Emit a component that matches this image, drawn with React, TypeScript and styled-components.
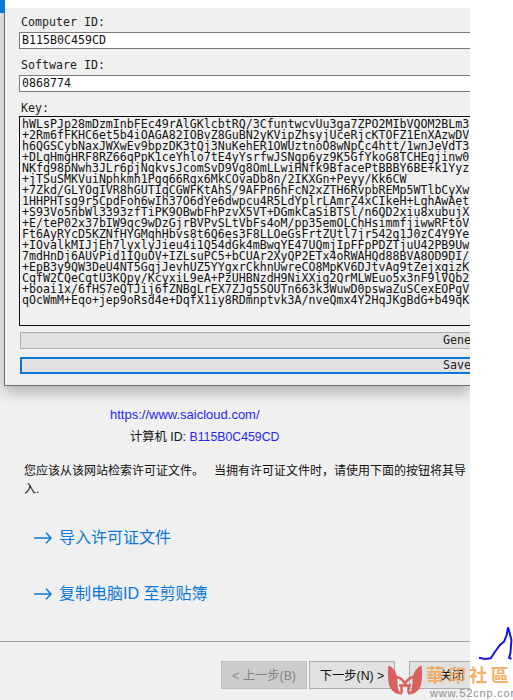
import React from "react";
import styled, { createGlobalStyle } from "styled-components";

const keyLines = [
  "hWLsPJp28mDzmInbFEc49rAlGKlcbtRQ/3CfuntwcvUu3ga7ZPO2MIbVQOM2BLm3",
  "+2Rm6fFKHC6et5b4iOAGA82IOBvZ8GuBN2yKVipZhsyjUceRjcKTOFZ1EnXAzwDV",
  "h6QGSCybNaxJWXwEv9bpzDK3tQj3NuKehER1OWUztnoO8wNpCc4htt/1wnJeVdT3",
  "+DLqHmgHRF8RZ66qPpK1ceYhlo7tE4yYsrfwJSNgp6yz9K5GfYkoG8TCHEgjinw0",
  "NKfq98pNwh3JLr6pjNqkvsJcomSvD9Vg8OmLLwiHNfk9BfacePtBBBY6BE+k1Yyz",
  "+jTSuSMKVuiNphkmh1Pgq66Rgx6MkCOvaDb8n/2IKXGn+Peyy/Kk6CW",
  "+7Zkd/GLYOgIVR8hGUTIqCGWFKtAhS/9AFPn6hFcN2xZTH6RvpbREMp5WTlbCyXw",
  "1HHPHTsg9r5CpdFoh6wIh37O6dYe6dwpcu4R5LdYplrLAmrZ4xCIkeH+LqhAwAet",
  "+S93Vo5nbWl3393zfTiPK9OBwbFhPzvX5VT+DGmkCaSiBTSl/n6QD2xiu8xubujX",
  "+E/teP02x37bIW9qc9wDzGjrBVPvSLtVbFs4oM/pp35emOLChHsimmfjiwwRFtoV",
  "Ft6AyRYcD5KZNfHYGMqhHbvs8t6Q6es3F8LLOeGsFrtZUtl7jr542g1J0zC4Y9Ye",
  "+IOvalkMIJjEh7lyxlyJieu4i1Q54dGk4mBwqYE47UQmjIpFFpPDZTjuU42PB9Uw",
  "7mdHnDj6AUvPid1IQuOV+IZLsuPC5+bCUAr2XyQP2ETx4oRWAHQd88BVA8OD9DI/",
  "+EpB3y9QW3DeU4NT5GqjJevhUZ5YYgxrCkhnUwreCO8MpKV6DJtvAg9tZejxgizK",
  "CqfW2CQeCqtU3KQpy/KcyxiL9eA+PzUHBNzdH9NiXXig2QrMLWEuo5x3nF9lVQb2",
  "+boai1x/6fHS7eQTJij6fZNBgLrEX7ZJg5SOUTn663k3WuwD0pswaZuSCexEOPgV",
  "qOcWmM+Eqo+jep9oRsd4e+DqfX1iy8RDmnptvk3A/nveQmx4Y2HqJKgBdG+b49qK",
];

const GlobalStyle = createGlobalStyle`
  html, body {
    margin: 0;
    padding: 0;
    background: #fff;
  }
`;

const Page = styled.div`
  position: relative;
  width: 513px;
  height: 700px;
  overflow: hidden;
  background: #fff;
  font-family: "Liberation Sans", "Noto Sans CJK SC", sans-serif;
`;

const Wizard = styled.div`
  position: relative;
  width: 470px;
  height: 700px;
  box-sizing: border-box;
  padding-top: 407px;
  display: flex;
  flex-direction: column;
  overflow: hidden;
  background: #f0f0f0;
  color: #111;
  font-size: 12.3px;
`;

const SiteLink = styled.div`
  margin-left: 110px;
  color: #2a1ff0;
  font-size: 13px;
  line-height: 16px;
`;

const IdRow = styled.div`
  margin: 5px 0 0 130px;
  line-height: 18px;
`;

const IdValue = styled.span`
  color: #2a1ff0;
`;

const Notice = styled.p`
  margin: 16px 0 0 24px;
  font-size: 12px;
  line-height: 18px;
  white-space: pre-wrap;
`;

const Action = styled.div`
  display: flex;
  align-items: center;
  gap: 7px;
  margin-left: 34px;
  color: #0a78d7;
  font-size: 16px;
  line-height: 20px;
`;

const ActionList = styled.div`
  display: flex;
  flex-direction: column;
  gap: 36px;
  margin-top: 30px;
`;

const Footer = styled.div`
  display: flex;
  gap: 2px;
  margin-top: 37px;
  padding: 19px 0 0 221px;
  border-top: 1px solid #a0a0a0;
`;

const WizardButton = styled.div<{ $disabled?: boolean }>`
  box-sizing: border-box;
  flex: 0 0 86px;
  height: 28px;
  display: flex;
  align-items: center;
  justify-content: center;
  background: ${({ $disabled }) => ($disabled ? "#cccccc" : "#e1e1e1")};
  border: 1px solid ${({ $disabled }) => ($disabled ? "#bfbfbf" : "#adadad")};
  color: ${({ $disabled }) => ($disabled ? "#838383" : "#111")};
  &:last-child {
    margin-left: 12px;
  }
`;

const Dialog = styled.div`
  position: absolute;
  top: 0;
  left: 4px;
  width: 466px;
  height: 386px;
  box-sizing: border-box;
  padding: 6px 0 0 14px;
  background: #f0f0f0;
  border-top: 8px solid #fff;
  border-left: 1px solid #6e6e6e;
  border-bottom: 1px solid #6e6e6e;
  box-shadow: 0 6px 14px rgba(0, 0, 0, 0.28);
  font-family: "DejaVu Sans Mono", monospace;
  font-size: 11.62px;
  color: #111;
  overflow: hidden;
`;

const TitleAccent = styled.div`
  position: absolute;
  top: 0;
  left: 0;
  width: 5px;
  height: 13px;
  background: #0a78d7;
`;

const FieldLabel = styled.div`
  margin-left: 2px;
  height: 14px;
  color: #222;
  line-height: 16px;
`;

const FieldInput = styled.div`
  box-sizing: border-box;
  width: 470px;
  height: 17px;
  margin: 4px 0 8px;
  padding-left: 2px;
  background: #fff;
  border: 1px solid #7a7a7a;
  line-height: 15px;
`;

const KeyBox = styled.div`
  box-sizing: border-box;
  width: 470px;
  height: 210px;
  margin-top: 2px;
  padding: 2px 0 0 2px;
  border: 1px solid #111;
  color: #111;
  line-height: 11px;
  white-space: pre;
  overflow: hidden;
`;

const DialogButton = styled.div<{ $focused?: boolean }>`
  box-sizing: border-box;
  width: 470px;
  height: 17px;
  margin-top: ${({ $focused }) => ($focused ? "8px" : "6px")};
  margin-left: 1px;
  padding-left: ${({ $focused }) => ($focused ? "421px" : "422px")};
  background: #e1e1e1;
  border: ${({ $focused }) => ($focused ? "2px solid #0a78d7" : "1px solid #adadad")};
  color: #222;
  line-height: ${({ $focused }) => ($focused ? "13px" : "15px")};
  white-space: nowrap;
  overflow: hidden;
`;

const Watermark = styled.div`
  position: absolute;
  left: 384px;
  top: 662px;
  width: 129px;
  height: 38px;
  pointer-events: none;
`;

const WatermarkTitle = styled.div`
  position: absolute;
  left: 42px;
  top: 1px;
  color: rgba(240, 165, 85, 0.85);
  font-family: "Noto Sans CJK TC", sans-serif;
  font-size: 18.5px;
  font-weight: 700;
  line-height: 23px;
  letter-spacing: 3px;
  white-space: nowrap;
`;

const WatermarkUrl = styled.div`
  position: absolute;
  left: 46px;
  top: 25px;
  color: #8f8f8f;
  font-size: 11px;
  line-height: 13px;
  letter-spacing: 0.8px;
  white-space: nowrap;
`;

const Scribble = styled.svg`
  position: absolute;
  left: 477px;
  top: 624px;
`;

const ArrowIcon = () => (
  <svg width="18" height="12" viewBox="0 0 18 12" fill="none" stroke="#0a78d7" strokeWidth="1.5">
    <path d="M0 6h17M12 .8 17 6l-5 5.2" />
  </svg>
);

export default function App() {
  return (
    <Page>
      <GlobalStyle />
      <Wizard>
        <SiteLink>https://www.saicloud.com/</SiteLink>
        <IdRow>
          计算机 ID: <IdValue>B115B0C459CD</IdValue>
        </IdRow>
        <Notice>您应该从该网站检索许可证文件。   当拥有许可证文件时，请使用下面的按钮将其导入.</Notice>
        <ActionList>
          <Action>
            <ArrowIcon />
            导入许可证文件
          </Action>
          <Action>
            <ArrowIcon />
            复制电脑ID 至剪贴簿
          </Action>
        </ActionList>
        <Footer>
          <WizardButton $disabled>&lt; 上一步(B)</WizardButton>
          <WizardButton>下一步(N) &gt;</WizardButton>
          <WizardButton>关闭</WizardButton>
        </Footer>

        <Dialog>
          <FieldLabel>Computer ID:</FieldLabel>
          <FieldInput>B115B0C459CD</FieldInput>
          <FieldLabel>Software ID:</FieldLabel>
          <FieldInput>0868774</FieldInput>
          <FieldLabel>Key:</FieldLabel>
          <KeyBox>{keyLines.join("\n")}</KeyBox>
          <DialogButton>Generate</DialogButton>
          <DialogButton $focused>Save</DialogButton>
        </Dialog>
        <TitleAccent />
      </Wizard>

      <Scribble width="36" height="40" viewBox="0 0 36 40" fill="none" stroke="#1414e0" strokeWidth="2">
        <path d="M2 33.700 8 35l5.700-.7 4.300-6.600L23 21l4-3.300 2.700-6.700 1.300-7.700 1.700 5.700 1.700 7-1 13-1.400 4.700 2.400 1.300" />
      </Scribble>

      <Watermark>
        <svg width="42" height="38" viewBox="0 0 42 38" fill="none" stroke="#d9605c">
          <path d="M5 4c7 4 8 10 8 17 0 5 1 9 5 11-7 0-12-4-13-12C4.500 14 4 9 5 4Z" fill="#d9605c" />
          <path d="M37 4c-7 4-8 10-8 17 0 5-1 9-5 11 7 0 12-4 13-12 .5-6 1-11 0-16Z" fill="#d9605c" />
          <path d="M12 15c4 0 7 3 9 7 2-4 5-7 9-7" strokeWidth="2.500" />
          <path d="M15 23.500h12M17.500 23.500V31M24.500 23.500V31" strokeWidth="2.500" />
        </svg>
        <WatermarkTitle>華印社區</WatermarkTitle>
        <WatermarkUrl>www.52cnp.com</WatermarkUrl>
      </Watermark>
    </Page>
  );
}
